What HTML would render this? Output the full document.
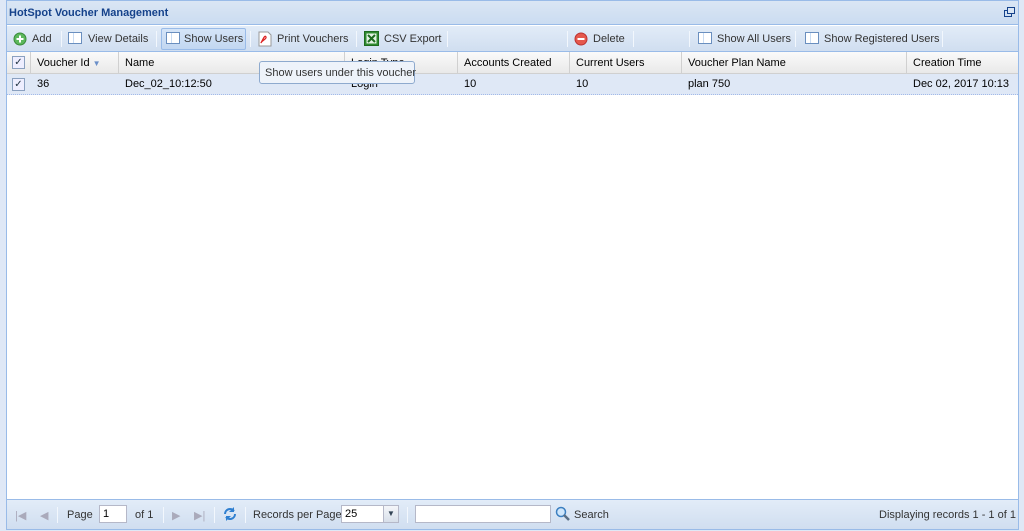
<!DOCTYPE html>
<html><head><meta charset="utf-8"><style>
*{box-sizing:border-box;margin:0;padding:0}
body{width:1024px;height:531px;background:#dfe8f6;font-family:"Liberation Sans",Arial,sans-serif;font-size:11px;color:#000;position:relative;overflow:hidden}
.panel{position:absolute;left:6px;top:0;width:1013px;height:530px;border:1px solid #99bbe8;background:#fff}
.hdr{position:absolute;left:0;top:0;width:100%;height:24px;background:linear-gradient(#dae6f4,#cbdcf1);border-bottom:1px solid #99bbe8;font-weight:bold;color:#15428b;padding:6px 0 0 2px;font-size:11px}
.tb{position:absolute;left:0;top:25px;width:100%;height:26px;background:linear-gradient(#e2ecf8,#d0def0);border-bottom:1px solid #99bbe8}
.tb span,.bb span{position:absolute;top:7px;color:#333;white-space:nowrap}
.sep{position:absolute;top:5px;width:1px;height:16px;background:#aac4e4;border-right:1px solid #f2f7fd}
.ic{position:absolute;top:6px;width:14px;height:12px;border:1px solid #6a8fbf;background:linear-gradient(90deg,#fff 0 4px,#c9dcf3 4px 5px,#fff 5px)}
.gh{position:absolute;left:0;top:51px;width:100%;height:22px;background:linear-gradient(#fafafa,#e9e9e9);border-bottom:1px solid #d0d0d0}
.gh div,.row div{position:absolute;top:0;height:100%;border-right:1px solid #d0d0d0;padding:5px 0 0 6px;white-space:nowrap;overflow:hidden}
.row{position:absolute;left:0;top:73px;width:100%;height:21px;background:#dfe8f6;border-bottom:1px dotted #a3bae9}
.row div{border-right:none;padding-top:4px}
.cb{position:absolute;left:5px;top:4px;width:13px;height:13px;border:1px solid #8aa0bf;background:#eef;font-size:10px;line-height:11px;text-align:center;color:#234;padding:0!important}
.bb{position:absolute;left:0;bottom:0;width:100%;height:30px;background:linear-gradient(#e2ecf8,#d0def0);border-top:1px solid #99bbe8}
.bb span{top:9px}
.inp{position:absolute;background:#fff;border:1px solid #b5b8c8;height:18px;top:5px;padding:2px 3px}
.tip{position:absolute;left:252px;top:60px;width:156px;height:23px;background:#eef3fa;border:1px solid #8eaace;border-radius:3px;padding:5px 0 0 5px;color:#333;white-space:nowrap}
</style></head><body>
<div class="panel">
<div class="hdr">HotSpot Voucher Management
<svg style="position:absolute;right:3px;top:6px" width="11" height="11"><rect x="0.5" y="3.5" width="7" height="6" fill="none" stroke="#15428b"/><rect x="3.5" y="0.5" width="7" height="6" fill="#dae6f4" stroke="#15428b"/></svg></div>
<div class="tb">
<svg style="position:absolute;left:6px;top:6px" width="14" height="14"><circle cx="7" cy="7" r="6" fill="#5cb85c" stroke="#3a8a3a"/><path d="M7 3.5v7M3.5 7h7" stroke="#fff" stroke-width="2"/></svg><span style="left:25px">Add</span>
<div class="sep" style="left:54px"></div>
<div class="ic" style="left:61px"></div><span style="left:81px">View Details</span>
<div class="sep" style="left:149px"></div>
<div style="position:absolute;left:154px;top:2px;width:85px;height:22px;border:1px solid #99bbe8;border-radius:2px;background:linear-gradient(#d5e5f8,#c2d7f1)"></div>
<div class="ic" style="left:159px"></div><span style="left:177px">Show Users</span>
<div class="sep" style="left:243px"></div>
<svg style="position:absolute;left:251px;top:5px" width="14" height="16"><path d="M1 1h9l3 3v11H1z" fill="#fff" stroke="#999"/><path d="M3 12c3-6 4-8 5-6s-5 4-5 6z" fill="none" stroke="#d22" stroke-width="1.3"/></svg><span style="left:270px">Print Vouchers</span>
<div class="sep" style="left:349px"></div>
<svg style="position:absolute;left:357px;top:5px" width="15" height="15"><rect x="0.5" y="0.5" width="14" height="14" fill="#2f8a2f" stroke="#1e6b1e"/><rect x="2.5" y="2.5" width="10" height="10" fill="#e5f3e5"/><path d="M4 4l7 7M11 4l-7 7" stroke="#1e6b1e" stroke-width="2"/></svg><span style="left:377px">CSV Export</span>
<div class="sep" style="left:440px"></div>
<div class="sep" style="left:560px"></div>
<svg style="position:absolute;left:567px;top:6px" width="14" height="14"><circle cx="7" cy="7" r="6" fill="#e5584c" stroke="#b33"/><path d="M3.5 7h7" stroke="#fff" stroke-width="2"/></svg><span style="left:586px">Delete</span>
<div class="sep" style="left:626px"></div>
<div class="sep" style="left:682px"></div>
<div class="ic" style="left:691px"></div><span style="left:710px">Show All Users</span>
<div class="sep" style="left:788px"></div>
<div class="ic" style="left:798px"></div><span style="left:817px">Show Registered Users</span>
<div class="sep" style="left:935px"></div>
</div>
<div class="gh">
<div style="left:0;width:24px"><span class="cb" style="position:absolute;left:5px;top:4px">✓</span></div>
<div style="left:24px;width:88px">Voucher Id <span style="color:#6b8fc8;font-size:8px;position:static">▼</span></div>
<div style="left:112px;width:226px">Name</div>
<div style="left:338px;width:113px">Login Type</div>
<div style="left:451px;width:112px">Accounts Created</div>
<div style="left:563px;width:112px">Current Users</div>
<div style="left:675px;width:225px">Voucher Plan Name</div>
<div style="left:900px;width:113px;border-right:none">Creation Time</div>
</div>
<div class="row">
<span class="cb" style="position:absolute;left:5px;top:4px">✓</span>
<div style="left:24px">36</div>
<div style="left:112px">Dec_02_10:12:50</div>
<div style="left:338px">Login</div>
<div style="left:451px">10</div>
<div style="left:563px">10</div>
<div style="left:675px">plan 750</div>
<div style="left:900px">Dec 02, 2017 10:13</div>
</div>
<div class="tip">Show users under this voucher</div>
<div class="bb">
<span style="left:8px;color:#aab">|◀</span><span style="left:33px;color:#aab">◀</span>
<div class="sep" style="left:50px;top:7px"></div>
<span style="left:60px">Page</span><div class="inp" style="left:92px;width:28px">1</div><span style="left:128px">of 1</span>
<div class="sep" style="left:156px;top:7px"></div>
<span style="left:165px;color:#aab">▶</span><span style="left:187px;color:#aab">▶|</span>
<div class="sep" style="left:207px;top:7px"></div>
<svg style="position:absolute;left:215px;top:6px" width="16" height="16"><path d="M3 8a5 5 0 0 1 9-3M13 8a5 5 0 0 1-9 3" fill="none" stroke="#2f7fd0" stroke-width="2"/><path d="M12 1v5h-5z M4 15v-5h5z" fill="#2f7fd0"/></svg>
<div class="sep" style="left:238px;top:7px"></div>
<span style="left:246px">Records per Page</span>
<div class="inp" style="left:334px;width:58px">25</div>
<div style="position:absolute;left:376px;top:5px;width:16px;height:18px;background:linear-gradient(#f4f6fa,#d7dfea);border:1px solid #b5b8c8;font-size:8px;text-align:center;padding-top:3px;color:#345">▼</div>
<div class="sep" style="left:400px;top:7px"></div>
<div class="inp" style="left:408px;width:136px"></div>
<svg style="position:absolute;left:548px;top:6px" width="16" height="16"><circle cx="6" cy="6" r="4.5" fill="#cfe6fb" stroke="#3c7fc0" stroke-width="1.5"/><path d="M9 9l5 5" stroke="#5a6f84" stroke-width="2.5"/></svg>
<span style="left:567px">Search</span>
<span style="left:872px">Displaying records 1 - 1 of 1</span>
</div>
</div>
</body></html>
